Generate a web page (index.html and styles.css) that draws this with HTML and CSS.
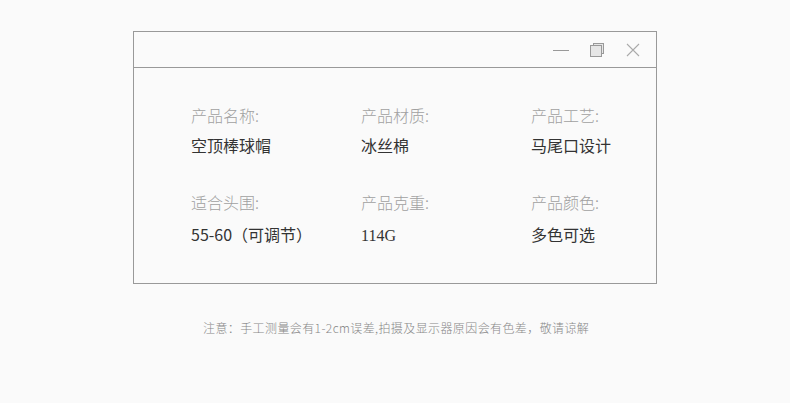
FILE: index.html
```html
<!DOCTYPE html>
<html lang="zh">
<head>
<meta charset="utf-8">
<link rel="stylesheet" href="styles.css">
</head>
<body>
<div class="page">
  <div class="window">
    <div class="titlebar">
      <svg class="icon min" width="18" height="14" viewBox="0 0 18 14"><line x1="1" y1="7.5" x2="17" y2="7.5" stroke="#999" stroke-width="1"/></svg>
      <svg class="icon restore" width="16" height="16" viewBox="0 0 16 16"><rect x="4.5" y="1.5" width="10" height="10" fill="#e6e6e6" stroke="#999"/><rect x="1.5" y="3.5" width="11" height="11" fill="#e6e6e6" stroke="#999"/></svg>
      <svg class="icon close" width="14" height="14" viewBox="0 0 14 14"><path d="M1 1L13 13M13 1L1 13" stroke="#aaa" stroke-width="1.1"/></svg>
    </div>
    <div class="grid">
      <div class="item"><div class="label">产品名称:</div><div class="value">空顶棒球帽</div></div>
      <div class="item"><div class="label">产品材质:</div><div class="value">冰丝棉</div></div>
      <div class="item"><div class="label">产品工艺:</div><div class="value">马尾口设计</div></div>
      <div class="item row2"><div class="label">适合头围:</div><div class="value">55-60（可调节）</div></div>
      <div class="item row2"><div class="label">产品克重:</div><div class="value num">114G</div></div>
      <div class="item row2"><div class="label">产品颜色:</div><div class="value">多色可选</div></div>
    </div>
  </div>
  <p class="note">注意：手工测量会有1-2cm误差,拍摄及显示器原因会有色差，敬请谅解</p>
</div>
</body>
</html>
```
FILE: styles.css
```css
html, body { margin: 0; padding: 0; background: #fafafa; }
body { font-family: "Noto Sans CJK SC", "Noto Sans", sans-serif; }
.page { width: 790px; height: 403px; padding-top: 31px; box-sizing: border-box; }
.window {
  margin-left: 133px;
  width: 524px;
  height: 253px;
  box-sizing: border-box;
  border: 1px solid #999;
}
.titlebar {
  height: 36px;
  border-bottom: 1px solid #999;
  display: flex;
  justify-content: flex-end;
  align-items: center;
  padding-right: 16px;
  padding-top: 1px;
  box-sizing: border-box;
}
.icon { display: block; }
.restore { margin-left: 19px; }
.close { margin-left: 21px; }
.grid {
  display: grid;
  grid-template-columns: 170px 170px 150px;
  row-gap: 35px;
  padding: 36px 0 0 57px;
}
.label { font-size: 16px; color: #a0a0a0; line-height: 22px; font-weight: 300; }
.value { font-size: 16px; color: #333; line-height: 22px; margin-top: 8px; }
.row2 .value { margin-top: 10px; }
.value.num { font-family: "Liberation Serif", serif; padding-top: 2px; }
.note {
  margin: 34px 0 0 203px;
  font-size: 12px;
  color: #888;
  line-height: 20px;
  font-weight: 300;
  letter-spacing: 0.4px;
}
```
